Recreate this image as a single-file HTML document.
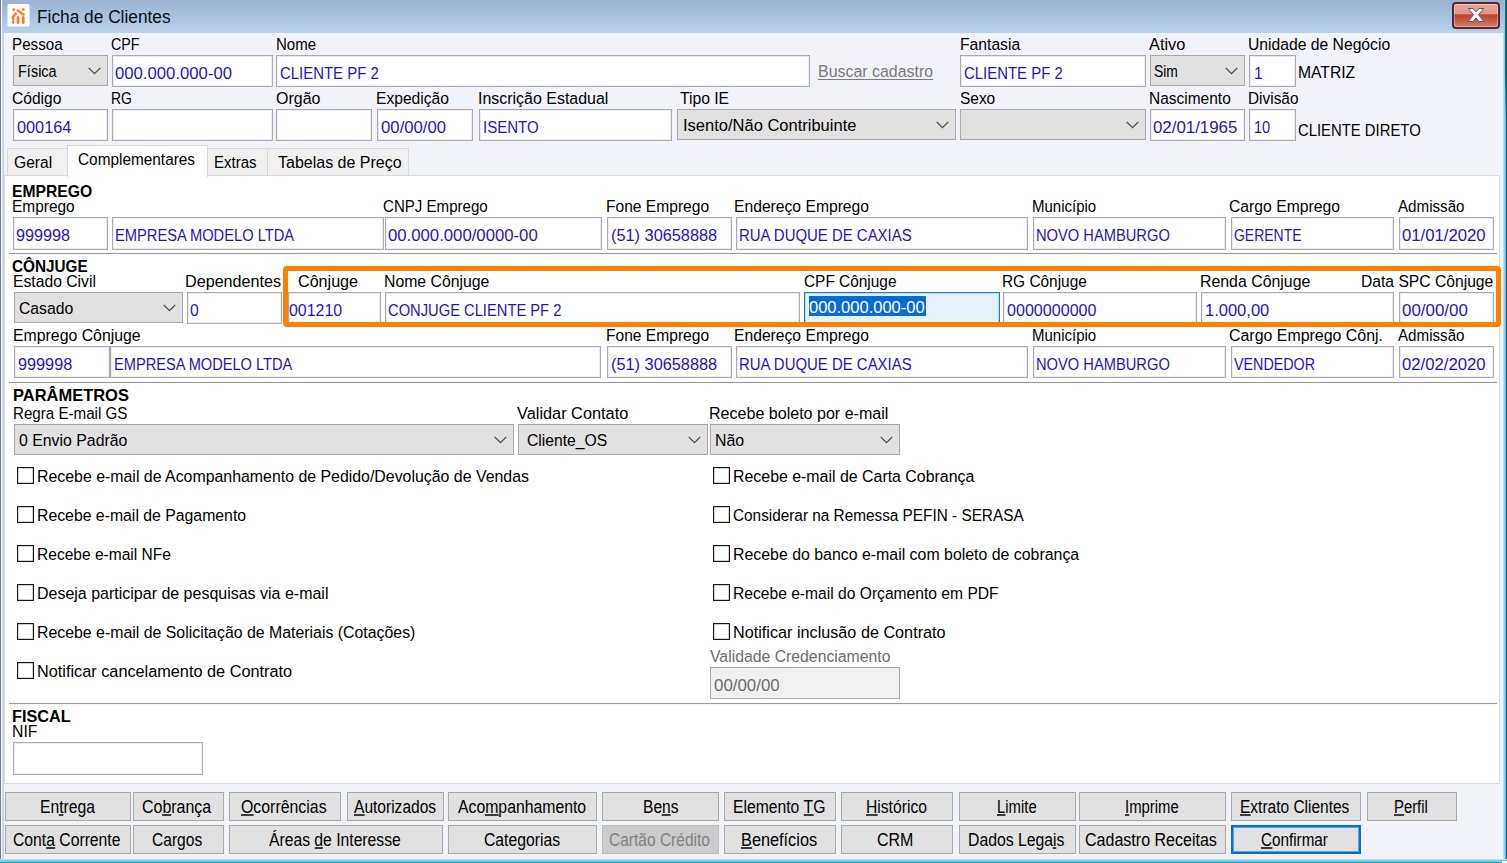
<!DOCTYPE html><html lang="pt-BR"><head><meta charset="utf-8"><title>Ficha de Clientes</title><style>
*{box-sizing:border-box;margin:0;padding:0}
html,body{width:1507px;height:863px;overflow:hidden;background:#f2f3f9}
body{position:relative;font-family:"Liberation Sans",sans-serif;font-size:15.5px;color:#000;line-height:18px}
.a{position:absolute;white-space:nowrap}
.x{position:absolute;white-space:nowrap;height:18px;line-height:18px;transform-origin:0 0}
.v{color:#1f14c4}
.g{color:#6d6d6d}
.i{position:absolute;background:#fff;border:1px solid #a9abb1;box-shadow:inset 0 0 0 1px #ecedf0}
.s{position:absolute;background:#e1e1e1;border:1px solid #a9a9a9}
.s svg{position:absolute;right:6px;top:11px}
.b{position:absolute;background:#e1e1e1;border:1px solid #a9a9a9}
.x u{text-decoration:none;border-bottom:2px solid #3c3c3c;display:inline-block;line-height:15px;height:16px}
.c{position:absolute;border:1px solid #161616;background:#fff;box-shadow:inset 0 0 0 .5px rgba(0,0,0,.35)}
.hr{position:absolute;height:1px;background:#9a9a9a;box-shadow:0 0 1px rgba(120,120,120,.45)}
.t{position:absolute;background:#f0f0f0;border:1px solid #d9d9d9;border-bottom:none}
</style></head><body>
<div class="a" style="left:0;top:0;width:1507px;height:33px;background:linear-gradient(#98b3d3,#b9d2eb)"></div>
<div class="a" style="left:0;top:0;width:1px;height:863px;background:#7b7d80"></div>
<div class="a" style="left:1px;top:0;width:1px;height:863px;background:#f4f8fc"></div>
<div class="a" style="left:2px;top:33px;width:2px;height:830px;background:linear-gradient(90deg,#cfdff0,#bdd3ec)"></div>
<div class="a" style="left:1503px;top:33px;width:1px;height:830px;background:#c9dbee"></div>
<div class="a" style="left:1504px;top:0;width:1px;height:863px;background:#93d2f1"></div>
<div class="a" style="left:1505px;top:0;width:1px;height:863px;background:#58c6ec"></div>
<div class="a" style="left:1506px;top:0;width:1px;height:863px;background:#1c5a6c"></div>
<div class="a" style="left:1505px;top:0;width:2px;height:120px;background:linear-gradient(#1c5a6c 60%,rgba(28,90,108,0))"></div>
<div class="a" style="left:0;top:859px;width:1507px;height:1px;background:#c2d7ee"></div>
<div class="a" style="left:0;top:860px;width:1507px;height:2px;background:#6bd0e8"></div>
<div class="a" style="left:0;top:862px;width:1507px;height:1px;background:#1ea3b8"></div>
<div class="a" style="left:1502px;top:861px;width:5px;height:2px;background:#fff"></div>
<svg class="a" style="left:7px;top:4px" width="23" height="23" viewBox="0 0 23 23"><rect x="0.5" y="0" width="22" height="22.5" rx="1.5" fill="#fff"/><g stroke="#ff7a22" stroke-linecap="round" fill="none"><path d="M10.6 6.4l6 4.4" stroke-width="2.4"/><path d="M8.8 9.4l-3.2 4" stroke-width="2.4"/><path d="M11 13.2v5.6M16.3 13.2v5.6" stroke-width="2.6"/><path d="M6.2 14.2v4.8" stroke-width="2.2" stroke-dasharray="1.6 1.9"/></g><circle cx="6.7" cy="5.5" r="1.5" fill="#ff8a3a"/><circle cx="16.2" cy="5.5" r="1.5" fill="#ff8a3a"/></svg>
<div class="x " style="left:36.5px;top:8px;font-size:18.3px;transform:scaleX(0.946);color:#101010">Ficha de Clientes</div>
<div class="a" style="left:1452px;top:2px;width:48px;height:27px;border:2px solid #5a2733;border-radius:4px;background:linear-gradient(#eaa99b 0%,#e39585 45%,#b9442b 46%,#c65e48 75%,#d98070 100%);box-shadow:inset 0 0 0 1px rgba(255,255,255,.35)"></div>
<svg class="a" style="left:1467px;top:7px" width="18" height="16" viewBox="0 0 18 16"><path d="M1.2 1.5h5l2.8 3.4 2.8-3.4h5l-5.3 6.3 5.5 6.7h-5.2l-2.8-3.6-2.8 3.6h-5.2l5.5-6.7z" fill="#f7f7f7" stroke="#6e5358" stroke-width="1" stroke-linejoin="round"/></svg>
<div class="x " style="left:11.8px;top:36px;font-size:16.7px;transform:scaleX(0.910);">Pessoa</div>
<div class="x " style="left:110.6px;top:36px;font-size:16.7px;transform:scaleX(0.856);">CPF</div>
<div class="x " style="left:275.5px;top:36px;font-size:16.7px;transform:scaleX(0.902);">Nome</div>
<div class="x " style="left:959.7px;top:36px;font-size:16.7px;transform:scaleX(0.940);">Fantasia</div>
<div class="x " style="left:1149.2px;top:36px;font-size:16.7px;transform:scaleX(0.978);">Ativo</div>
<div class="x " style="left:1247.8px;top:36px;font-size:16.7px;transform:scaleX(0.940);">Unidade de Negócio</div>
<div class="s" style="left:13px;top:55px;width:95px;height:31px"><svg width="13" height="8" viewBox="0 0 13 8"><path d="M0.7 0.9l5.8 5.8 5.8-5.8" stroke="#4a4a4a" stroke-width="1.3" fill="none"/></svg></div>
<div class="x " style="left:17.5px;top:63px;font-size:16.7px;transform:scaleX(0.869);">Física</div>
<div class="i" style="left:112px;top:55px;width:161px;height:32px;"></div>
<div class="x v" style="left:115.0px;top:65px;font-size:16.7px;transform:scaleX(1.001);">000.000.000-00</div>
<div class="i" style="left:276px;top:55px;width:534px;height:32px;"></div>
<div class="x v" style="left:279.9px;top:65px;font-size:16.7px;transform:scaleX(0.895);">CLIENTE PF 2</div>
<div class="x " style="left:818.2px;top:63px;font-size:16.7px;transform:scaleX(0.955);color:#7a7a7a;text-decoration:underline;text-underline-offset:2px;text-decoration-thickness:1px">Buscar cadastro</div>
<div class="i" style="left:960px;top:55px;width:186px;height:32px;"></div>
<div class="x v" style="left:963.9px;top:65px;font-size:16.7px;transform:scaleX(0.895);">CLIENTE PF 2</div>
<div class="s" style="left:1150px;top:55px;width:95px;height:31px"><svg width="13" height="8" viewBox="0 0 13 8"><path d="M0.7 0.9l5.8 5.8 5.8-5.8" stroke="#4a4a4a" stroke-width="1.3" fill="none"/></svg></div>
<div class="x " style="left:1154.3px;top:63px;font-size:16.7px;transform:scaleX(0.831);">Sim</div>
<div class="i" style="left:1249px;top:55px;width:47px;height:32px;"></div>
<div class="x v" style="left:1254.2px;top:65px;font-size:16.7px;transform:scaleX(0.940);">1</div>
<div class="x " style="left:1298.3px;top:64px;font-size:16.7px;transform:scaleX(0.939);">MATRIZ</div>
<div class="x " style="left:11.8px;top:90px;font-size:16.7px;transform:scaleX(0.933);">Código</div>
<div class="x " style="left:110.6px;top:90px;font-size:16.7px;transform:scaleX(0.834);">RG</div>
<div class="x " style="left:275.5px;top:90px;font-size:16.7px;transform:scaleX(0.959);">Orgão</div>
<div class="x " style="left:376.1px;top:90px;font-size:16.7px;transform:scaleX(0.936);">Expedição</div>
<div class="x " style="left:478.1px;top:90px;font-size:16.7px;transform:scaleX(0.956);">Inscrição Estadual</div>
<div class="x " style="left:679.7px;top:90px;font-size:16.7px;transform:scaleX(0.939);">Tipo IE</div>
<div class="x " style="left:959.7px;top:90px;font-size:16.7px;transform:scaleX(0.925);">Sexo</div>
<div class="x " style="left:1149.2px;top:90px;font-size:16.7px;transform:scaleX(0.928);">Nascimento</div>
<div class="x " style="left:1247.8px;top:90px;font-size:16.7px;transform:scaleX(0.922);">Divisão</div>
<div class="i" style="left:13px;top:109px;width:95px;height:32px;"></div>
<div class="x v" style="left:16.8px;top:119px;font-size:16.7px;transform:scaleX(0.976);">000164</div>
<div class="i" style="left:112px;top:109px;width:161px;height:32px;"></div>
<div class="i" style="left:276px;top:109px;width:96px;height:32px;"></div>
<div class="i" style="left:377px;top:109px;width:96px;height:32px;"></div>
<div class="x v" style="left:381.1px;top:119px;font-size:16.7px;transform:scaleX(1.000);">00/00/00</div>
<div class="i" style="left:479px;top:109px;width:193px;height:32px;"></div>
<div class="x v" style="left:482.8px;top:119px;font-size:16.7px;transform:scaleX(0.900);">ISENTO</div>
<div class="s" style="left:677px;top:109px;width:279px;height:31px"><svg width="13" height="8" viewBox="0 0 13 8"><path d="M0.7 0.9l5.8 5.8 5.8-5.8" stroke="#4a4a4a" stroke-width="1.3" fill="none"/></svg></div>
<div class="x " style="left:682.6px;top:117px;font-size:16.7px;transform:scaleX(0.989);">Isento/Não Contribuinte</div>
<div class="s" style="left:960px;top:109px;width:186px;height:31px"><svg width="13" height="8" viewBox="0 0 13 8"><path d="M0.7 0.9l5.8 5.8 5.8-5.8" stroke="#4a4a4a" stroke-width="1.3" fill="none"/></svg></div>
<div class="i" style="left:1150px;top:109px;width:95px;height:32px;"></div>
<div class="x v" style="left:1153.3px;top:119px;font-size:16.7px;transform:scaleX(1.010);">02/01/1965</div>
<div class="i" style="left:1249px;top:109px;width:47px;height:32px;"></div>
<div class="x v" style="left:1254.0px;top:119px;font-size:16.7px;transform:scaleX(0.872);">10</div>
<div class="x " style="left:1298.3px;top:122px;font-size:16.7px;transform:scaleX(0.890);">CLIENTE DIRETO</div>
<div class="a" style="left:4px;top:175px;width:1496px;height:609px;background:#fff;border:1px solid #dadada"></div>
<div class="t" style="left:7px;top:148px;width:61px;height:27px"></div>
<div class="t" style="left:207px;top:148px;width:61px;height:27px"></div>
<div class="t" style="left:267px;top:148px;width:142px;height:27px"></div>
<div class="t" style="left:67px;top:145px;width:141px;height:32px;background:#fff"></div>
<div class="x " style="left:14.4px;top:154px;font-size:16.7px;transform:scaleX(0.935);">Geral</div>
<div class="x " style="left:77.5px;top:151px;font-size:16.7px;transform:scaleX(0.921);">Complementares</div>
<div class="x " style="left:213.5px;top:154px;font-size:16.7px;transform:scaleX(0.898);">Extras</div>
<div class="x " style="left:277.5px;top:154px;font-size:16.7px;transform:scaleX(0.959);">Tabelas de Preço</div>
<div class="x " style="left:12.0px;top:183px;font-size:16.7px;transform:scaleX(0.941);font-weight:bold;">EMPREGO</div>
<div class="x " style="left:12.0px;top:198px;font-size:16.7px;transform:scaleX(0.925);">Emprego</div>
<div class="x " style="left:383.4px;top:198px;font-size:16.7px;transform:scaleX(0.903);">CNPJ Emprego</div>
<div class="x " style="left:605.7px;top:198px;font-size:16.7px;transform:scaleX(0.934);">Fone Emprego</div>
<div class="x " style="left:734.4px;top:198px;font-size:16.7px;transform:scaleX(0.939);">Endereço Emprego</div>
<div class="x " style="left:1031.5px;top:198px;font-size:16.7px;transform:scaleX(0.898);">Município</div>
<div class="x " style="left:1229.3px;top:198px;font-size:16.7px;transform:scaleX(0.942);">Cargo Emprego</div>
<div class="x " style="left:1398.2px;top:198px;font-size:16.7px;transform:scaleX(0.908);">Admissão</div>
<div class="i" style="left:13px;top:217px;width:95px;height:33px;"></div>
<div class="x v" style="left:16.4px;top:227px;font-size:16.7px;transform:scaleX(0.971);">999998</div>
<div class="i" style="left:112px;top:217px;width:272px;height:33px;"></div>
<div class="x v" style="left:114.6px;top:227px;font-size:16.7px;transform:scaleX(0.879);">EMPRESA MODELO LTDA</div>
<div class="i" style="left:385px;top:217px;width:217px;height:33px;"></div>
<div class="x v" style="left:388.1px;top:227px;font-size:16.7px;transform:scaleX(1.002);">00.000.000/0000-00</div>
<div class="i" style="left:607px;top:217px;width:125px;height:33px;"></div>
<div class="x v" style="left:610.6px;top:227px;font-size:16.7px;transform:scaleX(0.978);">(51) 30658888</div>
<div class="i" style="left:736px;top:217px;width:292px;height:33px;"></div>
<div class="x v" style="left:739.1px;top:227px;font-size:16.7px;transform:scaleX(0.895);">RUA DUQUE DE CAXIAS</div>
<div class="i" style="left:1033px;top:217px;width:193px;height:33px;"></div>
<div class="x v" style="left:1035.8px;top:227px;font-size:16.7px;transform:scaleX(0.880);">NOVO HAMBURGO</div>
<div class="i" style="left:1231px;top:217px;width:163px;height:33px;"></div>
<div class="x v" style="left:1234.0px;top:227px;font-size:16.7px;transform:scaleX(0.837);">GERENTE</div>
<div class="i" style="left:1399px;top:217px;width:95px;height:33px;"></div>
<div class="x v" style="left:1402.3px;top:227px;font-size:16.7px;transform:scaleX(1.001);">01/01/2020</div>
<div class="hr" style="left:9px;top:253px;width:1488px"></div>
<div class="x " style="left:12.0px;top:258px;font-size:16.7px;transform:scaleX(0.917);font-weight:bold;">CÔNJUGE</div>
<div class="x " style="left:13.0px;top:273px;font-size:16.7px;transform:scaleX(0.941);">Estado Civil</div>
<div class="x " style="left:185.3px;top:273px;font-size:16.7px;transform:scaleX(0.968);">Dependentes</div>
<div class="x " style="left:298.1px;top:273px;font-size:16.7px;transform:scaleX(0.966);">Cônjuge</div>
<div class="x " style="left:384.4px;top:273px;font-size:16.7px;transform:scaleX(0.947);">Nome Cônjuge</div>
<div class="x " style="left:804.0px;top:273px;font-size:16.7px;transform:scaleX(0.923);">CPF Cônjuge</div>
<div class="x " style="left:1002.2px;top:273px;font-size:16.7px;transform:scaleX(0.923);">RG Cônjuge</div>
<div class="x " style="left:1199.7px;top:273px;font-size:16.7px;transform:scaleX(0.951);">Renda Cônjuge</div>
<div class="x " style="left:1361.2px;top:273px;font-size:16.7px;transform:scaleX(0.938);">Data SPC Cônjuge</div>
<div class="s" style="left:14px;top:292px;width:169px;height:31px"><svg width="13" height="8" viewBox="0 0 13 8"><path d="M0.7 0.9l5.8 5.8 5.8-5.8" stroke="#4a4a4a" stroke-width="1.3" fill="none"/></svg></div>
<div class="x " style="left:19.0px;top:300px;font-size:16.7px;transform:scaleX(0.943);">Casado</div>
<div class="i" style="left:187px;top:292px;width:95px;height:32px;"></div>
<div class="x v" style="left:190.3px;top:302px;font-size:16.7px;transform:scaleX(0.940);">0</div>
<div class="i" style="left:288px;top:292px;width:93px;height:32px;"></div>
<div class="x v" style="left:289.1px;top:302px;font-size:16.7px;transform:scaleX(0.953);">001210</div>
<div class="i" style="left:385px;top:292px;width:415px;height:32px;"></div>
<div class="x v" style="left:388.4px;top:302px;font-size:16.7px;transform:scaleX(0.882);">CONJUGE CLIENTE PF 2</div>
<div class="i" style="left:804px;top:292px;width:196px;height:32px;border-color:#1c7cd6;background:#e5f1fb;box-shadow:inset 0 0 0 1px #b9d7f3"></div>
<div class="a" style="left:809px;top:296px;width:117px;height:20px;background:#0b6ad4"></div>
<div class="x " style="left:809.3px;top:299px;font-size:16.7px;transform:scaleX(0.989);color:#fff">000.000.000-00</div>
<div class="i" style="left:1003px;top:292px;width:194px;height:32px;"></div>
<div class="x v" style="left:1006.9px;top:302px;font-size:16.7px;transform:scaleX(0.964);">0000000000</div>
<div class="i" style="left:1201px;top:292px;width:193px;height:32px;"></div>
<div class="x v" style="left:1205.4px;top:302px;font-size:16.7px;transform:scaleX(0.989);">1.000,00</div>
<div class="i" style="left:1399px;top:292px;width:95px;height:32px;"></div>
<div class="x v" style="left:1402.3px;top:302px;font-size:16.7px;transform:scaleX(1.014);">00/00/00</div>
<div class="x " style="left:13.2px;top:327px;font-size:16.7px;transform:scaleX(0.949);">Emprego Cônjuge</div>
<div class="x " style="left:605.7px;top:327px;font-size:16.7px;transform:scaleX(0.934);">Fone Emprego</div>
<div class="x " style="left:734.4px;top:327px;font-size:16.7px;transform:scaleX(0.939);">Endereço Emprego</div>
<div class="x " style="left:1031.5px;top:327px;font-size:16.7px;transform:scaleX(0.898);">Município</div>
<div class="x " style="left:1229.3px;top:327px;font-size:16.7px;transform:scaleX(0.954);">Cargo Emprego Cônj.</div>
<div class="x " style="left:1398.2px;top:327px;font-size:16.7px;transform:scaleX(0.908);">Admissão</div>
<div class="i" style="left:14px;top:346px;width:96px;height:32px;"></div>
<div class="x v" style="left:17.6px;top:356px;font-size:16.7px;transform:scaleX(0.974);">999998</div>
<div class="i" style="left:110px;top:346px;width:491px;height:32px;"></div>
<div class="x v" style="left:113.9px;top:356px;font-size:16.7px;transform:scaleX(0.875);">EMPRESA MODELO LTDA</div>
<div class="i" style="left:607px;top:346px;width:125px;height:32px;"></div>
<div class="x v" style="left:610.6px;top:356px;font-size:16.7px;transform:scaleX(0.978);">(51) 30658888</div>
<div class="i" style="left:736px;top:346px;width:292px;height:32px;"></div>
<div class="x v" style="left:739.1px;top:356px;font-size:16.7px;transform:scaleX(0.895);">RUA DUQUE DE CAXIAS</div>
<div class="i" style="left:1033px;top:346px;width:193px;height:32px;"></div>
<div class="x v" style="left:1035.8px;top:356px;font-size:16.7px;transform:scaleX(0.880);">NOVO HAMBURGO</div>
<div class="i" style="left:1231px;top:346px;width:163px;height:32px;"></div>
<div class="x v" style="left:1234.0px;top:356px;font-size:16.7px;transform:scaleX(0.857);">VENDEDOR</div>
<div class="i" style="left:1399px;top:346px;width:95px;height:32px;"></div>
<div class="x v" style="left:1402.3px;top:356px;font-size:16.7px;transform:scaleX(1.001);">02/02/2020</div>
<div class="a" style="left:283px;top:266px;width:1218px;height:61px;border:5px solid #ff8000;border-radius:4px"></div>
<div class="hr" style="left:9px;top:382px;width:1488px"></div>
<div class="x " style="left:12.5px;top:387px;font-size:16.7px;transform:scaleX(0.987);font-weight:bold;">PARÂMETROS</div>
<div class="x " style="left:13.2px;top:405px;font-size:16.7px;transform:scaleX(0.907);">Regra E-mail GS</div>
<div class="x " style="left:516.8px;top:405px;font-size:16.7px;transform:scaleX(0.978);">Validar Contato</div>
<div class="x " style="left:708.5px;top:405px;font-size:16.7px;transform:scaleX(0.962);">Recebe boleto por e-mail</div>
<div class="s" style="left:14px;top:424px;width:500px;height:31px"><svg width="13" height="8" viewBox="0 0 13 8"><path d="M0.7 0.9l5.8 5.8 5.8-5.8" stroke="#4a4a4a" stroke-width="1.3" fill="none"/></svg></div>
<div class="x " style="left:19.0px;top:432px;font-size:16.7px;transform:scaleX(0.950);">0 Envio Padrão</div>
<div class="s" style="left:518px;top:424px;width:190px;height:31px"><svg width="13" height="8" viewBox="0 0 13 8"><path d="M0.7 0.9l5.8 5.8 5.8-5.8" stroke="#4a4a4a" stroke-width="1.3" fill="none"/></svg></div>
<div class="x " style="left:527.0px;top:432px;font-size:16.7px;transform:scaleX(0.940);">Cliente_OS</div>
<div class="s" style="left:710px;top:424px;width:190px;height:31px"><svg width="13" height="8" viewBox="0 0 13 8"><path d="M0.7 0.9l5.8 5.8 5.8-5.8" stroke="#4a4a4a" stroke-width="1.3" fill="none"/></svg></div>
<div class="x " style="left:714.5px;top:432px;font-size:16.7px;transform:scaleX(0.953);">Não</div>
<div class="c" style="left:17px;top:467px;width:17px;height:17px;"></div>
<div class="x " style="left:36.6px;top:468px;font-size:16.7px;transform:scaleX(0.952);">Recebe e-mail de Acompanhamento de Pedido/Devolução de Vendas</div>
<div class="c" style="left:17px;top:506px;width:17px;height:17px;"></div>
<div class="x " style="left:36.6px;top:507px;font-size:16.7px;transform:scaleX(0.947);">Recebe e-mail de Pagamento</div>
<div class="c" style="left:17px;top:545px;width:17px;height:17px;"></div>
<div class="x " style="left:36.6px;top:546px;font-size:16.7px;transform:scaleX(0.932);">Recebe e-mail NFe</div>
<div class="c" style="left:17px;top:584px;width:17px;height:17px;"></div>
<div class="x " style="left:36.6px;top:585px;font-size:16.7px;transform:scaleX(0.958);">Deseja participar de pesquisas via e-mail</div>
<div class="c" style="left:17px;top:623px;width:17px;height:17px;"></div>
<div class="x " style="left:36.6px;top:624px;font-size:16.7px;transform:scaleX(0.951);">Recebe e-mail de Solicitação de Materiais (Cotações)</div>
<div class="c" style="left:17px;top:662px;width:17px;height:17px;"></div>
<div class="x " style="left:36.6px;top:663px;font-size:16.7px;transform:scaleX(0.975);">Notificar cancelamento de Contrato</div>
<div class="c" style="left:713px;top:467px;width:17px;height:17px;"></div>
<div class="x " style="left:733.0px;top:468px;font-size:16.7px;transform:scaleX(0.953);">Recebe e-mail de Carta Cobrança</div>
<div class="c" style="left:713px;top:506px;width:17px;height:17px;"></div>
<div class="x " style="left:733.0px;top:507px;font-size:16.7px;transform:scaleX(0.919);">Considerar na Remessa PEFIN - SERASA</div>
<div class="c" style="left:713px;top:545px;width:17px;height:17px;"></div>
<div class="x " style="left:733.0px;top:546px;font-size:16.7px;transform:scaleX(0.952);">Recebe do banco e-mail com boleto de cobrança</div>
<div class="c" style="left:713px;top:584px;width:17px;height:17px;"></div>
<div class="x " style="left:733.0px;top:585px;font-size:16.7px;transform:scaleX(0.936);">Recebe e-mail do Orçamento em PDF</div>
<div class="c" style="left:713px;top:623px;width:17px;height:17px;"></div>
<div class="x " style="left:733.0px;top:624px;font-size:16.7px;transform:scaleX(0.971);">Notificar inclusão de Contrato</div>
<div class="x g" style="left:709.8px;top:648px;font-size:16.7px;transform:scaleX(0.946);">Validade Credenciamento</div>
<div class="i" style="left:710px;top:667px;width:190px;height:32px;background:#f0f0f0;box-shadow:none"></div>
<div class="x g" style="left:714.0px;top:677px;font-size:16.7px;transform:scaleX(1.012);">00/00/00</div>
<div class="hr" style="left:9px;top:703px;width:1488px"></div>
<div class="x " style="left:12.2px;top:708px;font-size:16.7px;transform:scaleX(0.975);font-weight:bold;">FISCAL</div>
<div class="x " style="left:11.8px;top:723px;font-size:16.7px;transform:scaleX(0.944);">NIF</div>
<div class="i" style="left:13px;top:742px;width:190px;height:33px;"></div>
<div class="b" style="left:5px;top:792px;width:126px;height:29px;"></div>
<div class="x " style="left:39.5px;top:798px;font-size:17.5px;transform:scaleX(0.896);">En<u>t</u>rega</div>
<div class="b" style="left:133px;top:792px;width:91px;height:29px;"></div>
<div class="x " style="left:141.9px;top:798px;font-size:17.5px;transform:scaleX(0.912);">Co<u>b</u>rança</div>
<div class="b" style="left:229px;top:792px;width:112px;height:29px;"></div>
<div class="x " style="left:241.1px;top:798px;font-size:17.5px;transform:scaleX(0.907);"><u>O</u>corrências</div>
<div class="b" style="left:347px;top:792px;width:97px;height:29px;"></div>
<div class="x " style="left:354.2px;top:798px;font-size:17.5px;transform:scaleX(0.888);"><u>A</u>utorizados</div>
<div class="b" style="left:448px;top:792px;width:149px;height:29px;"></div>
<div class="x " style="left:457.7px;top:798px;font-size:17.5px;transform:scaleX(0.902);">Aco<u>m</u>panhamento</div>
<div class="b" style="left:602px;top:792px;width:117px;height:29px;"></div>
<div class="x " style="left:642.6px;top:798px;font-size:17.5px;transform:scaleX(0.890);">Be<u>n</u>s</div>
<div class="b" style="left:724px;top:792px;width:112px;height:29px;"></div>
<div class="x " style="left:732.7px;top:798px;font-size:17.5px;transform:scaleX(0.896);">Elemento <u>T</u>G</div>
<div class="b" style="left:841px;top:792px;width:112px;height:29px;"></div>
<div class="x " style="left:865.7px;top:798px;font-size:17.5px;transform:scaleX(0.895);"><u>H</u>istórico</div>
<div class="b" style="left:959px;top:792px;width:117px;height:29px;"></div>
<div class="x " style="left:996.5px;top:798px;font-size:17.5px;transform:scaleX(0.850);"><u>L</u>imite</div>
<div class="b" style="left:1079px;top:792px;width:147px;height:29px;"></div>
<div class="x " style="left:1125.1px;top:798px;font-size:17.5px;transform:scaleX(0.850);"><u>I</u>mprime</div>
<div class="b" style="left:1231px;top:792px;width:130px;height:29px;"></div>
<div class="x " style="left:1240.3px;top:798px;font-size:17.5px;transform:scaleX(0.885);"><u>E</u>xtrato Clientes</div>
<div class="b" style="left:1367px;top:792px;width:90px;height:29px;"></div>
<div class="x " style="left:1394.0px;top:798px;font-size:17.5px;transform:scaleX(0.848);"><u>P</u>erfil</div>
<div class="b" style="left:5px;top:825px;width:126px;height:29px;"></div>
<div class="x " style="left:12.5px;top:831px;font-size:17.5px;transform:scaleX(0.898);">Cont<u>a</u> Corrente</div>
<div class="b" style="left:133px;top:825px;width:91px;height:29px;"></div>
<div class="x " style="left:152.3px;top:831px;font-size:17.5px;transform:scaleX(0.890);">Cargos</div>
<div class="b" style="left:229px;top:825px;width:214px;height:29px;"></div>
<div class="x " style="left:268.7px;top:831px;font-size:17.5px;transform:scaleX(0.897);">Áreas <u>d</u>e Interesse</div>
<div class="b" style="left:448px;top:825px;width:149px;height:29px;"></div>
<div class="x " style="left:483.6px;top:831px;font-size:17.5px;transform:scaleX(0.898);">Categorias</div>
<div class="b" style="left:602px;top:825px;width:117px;height:29px;background:#cccccc;border-color:#bfbfbf"></div>
<div class="x " style="left:608.5px;top:831px;font-size:17.5px;transform:scaleX(0.887);color:#838383">Cartão Crédito</div>
<div class="b" style="left:724px;top:825px;width:112px;height:29px;"></div>
<div class="x " style="left:741.3px;top:831px;font-size:17.5px;transform:scaleX(0.931);"><u>B</u>enefícios</div>
<div class="b" style="left:841px;top:825px;width:112px;height:29px;"></div>
<div class="x " style="left:876.9px;top:831px;font-size:17.5px;transform:scaleX(0.913);">CRM</div>
<div class="b" style="left:959px;top:825px;width:117px;height:29px;"></div>
<div class="x " style="left:968.4px;top:831px;font-size:17.5px;transform:scaleX(0.901);">Dados Lega<u>i</u>s</div>
<div class="b" style="left:1079px;top:825px;width:147px;height:29px;"></div>
<div class="x " style="left:1085.0px;top:831px;font-size:17.5px;transform:scaleX(0.916);">Cadastro Receitas</div>
<div class="b" style="left:1231px;top:825px;width:130px;height:29px;border:2px solid #0a6cd6;box-shadow:inset 0 0 0 1px #5b9fe6"></div>
<div class="x " style="left:1261.2px;top:831px;font-size:17.5px;transform:scaleX(0.871);"><u>C</u>onfirmar</div>
</body></html>
